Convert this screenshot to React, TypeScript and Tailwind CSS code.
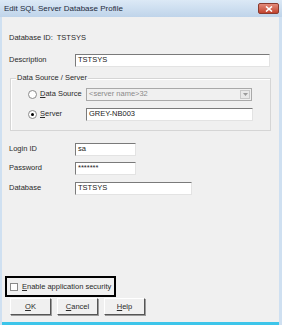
import React from "react";

const font = { fontFamily: '"Liberation Sans", Arial, sans-serif' };

function Field({ w, value, disabled }: { w: string; value: string; disabled?: boolean }) {
    return (
        <div
            className={`${w} h-[13px] border border-t-[#7a7a7a] border-l-[#7a7a7a] border-r-[#e3e3e3] border-b-[#e3e3e3] ${
                disabled ? "bg-[#f0f0f0] text-[#8a8a8a]" : "bg-white text-[#222]"
            } flex items-center pl-[2px] text-[7.5px] leading-none`}
        >
            {value}
        </div>
    );
}

function Radio({ checked }: { checked?: boolean }) {
    return (
        <div className="w-[9px] h-[9px] rounded-full border border-[#8a8a8a] bg-white flex items-center justify-center">
            {checked && <div className="w-[3px] h-[3px] rounded-full bg-black" />}
        </div>
    );
}

function Btn({ children }: { children: React.ReactNode }) {
    return (
        <div className="w-[41px] h-[17px] bg-[#f0f0f0] border border-t-white border-l-white border-r-[#555] border-b-[#555] shadow-[1px_1px_0_#9a9a9a] flex items-center justify-center">
            {children}
        </div>
    );
}

export default function App() {
    return (
        <div className="w-[282px] h-[325px] bg-[#cfe0f1] flex flex-col text-[#2a2a2a]" style={font}>
            {/* Title bar */}
            <div className="h-[17px] bg-gradient-to-b from-[#dce9f6] to-[#bfd4ea] flex items-center justify-between pl-[4px] pr-[3px]">
                <span className="text-[8px] text-[#1e2b3c] whitespace-nowrap">Edit SQL Server Database Profile</span>
                <div className="w-[21px] h-[11px] rounded-[2px] bg-gradient-to-b from-[#e28a7a] to-[#c2422d] border border-[#8a3a2e] flex items-center justify-center">
                    <svg width="8" height="6" viewBox="0 0 8 6">
                        <path d="M1 0.5 L7 5.5 M7 0.5 L1 5.5" stroke="white" strokeWidth="1.6" />
                    </svg>
                </div>
            </div>

            {/* Body */}
            <div className="flex-1 ml-[2px] mr-[3px] bg-[#f0f0f0] border-b-[3px] border-[#3dc5ea] flex flex-col text-[7.5px] leading-none whitespace-nowrap">
                <div className="flex pl-[7px] pt-[17px] gap-[4px]">
                    <span>Database ID:</span>
                    <span>TSTSYS</span>
                </div>

                <div className="flex items-center pl-[7px] mt-[12px]">
                    <span className="w-[66px]">Description</span>
                    <Field w="w-[195px]" value="TSTSYS" />
                </div>

                {/* Group box */}
                <div className="relative ml-[8px] w-[261px] h-[53px] mt-[11px] border border-[#d5d5d5] shadow-[inset_1px_1px_0_white]">
                    <span className="absolute -top-[5px] left-[5px] bg-[#f0f0f0] px-[1px]">Data Source / Server</span>
                    <div className="flex items-center pl-[17px] pt-[9px]">
                        <Radio />
                        <span className="ml-[3px] w-[46px]">
                            <u>D</u>ata Source
                        </span>
                        <div className="w-[166px] h-[13px] border border-[#a9a9a9] bg-[#f0f0f0] flex items-center justify-between text-[#8a8a8a]">
                            <span className="pl-[2px]">&lt;server name&gt;32</span>
                            <div className="w-[10px] h-[9px] mr-[1px] bg-[#e8e8e8] border border-[#c8c8c8] flex items-center justify-center">
                                <svg width="5" height="3" viewBox="0 0 5 3">
                                    <path d="M0 0 L5 0 L2.5 3 Z" fill="#9a9a9a" />
                                </svg>
                            </div>
                        </div>
                    </div>
                    <div className="flex items-center pl-[17px] mt-[7px]">
                        <Radio checked />
                        <span className="ml-[3px] w-[46px]">
                            <u>S</u>erver
                        </span>
                        <Field w="w-[167px]" value="GREY-NB003" />
                    </div>
                </div>

                <div className="flex flex-col pl-[7px] mt-[12px] gap-[6px]">
                    <div className="flex items-center">
                        <span className="w-[66px]">Login ID</span>
                        <Field w="w-[61px]" value="sa" />
                    </div>
                    <div className="flex items-center">
                        <span className="w-[66px]">Password</span>
                        <Field w="w-[61px]" value="*******" />
                    </div>
                    <div className="flex items-center mt-[1px]">
                        <span className="w-[66px]">Database</span>
                        <Field w="w-[117px]" value="TSTSYS" />
                    </div>
                </div>

                <div className="flex-1" />

                <div className="ml-[3px] w-[111px] h-[21px] border-2 border-black flex items-center pl-[3px] gap-[4px]">
                    <div className="w-[8px] h-[8px] border border-[#8a8a8a] bg-white" />
                    <span>
                        <u>E</u>nable application security
                    </span>
                </div>

                <div className="flex pl-[8px] gap-[6px] mt-[1px] mb-[7px]">
                    <Btn>
                        <u>O</u>K
                    </Btn>
                    <Btn>
                        <u>C</u>ancel
                    </Btn>
                    <Btn>
                        <u>H</u>elp
                    </Btn>
                </div>
            </div>
        </div>
    );
}
